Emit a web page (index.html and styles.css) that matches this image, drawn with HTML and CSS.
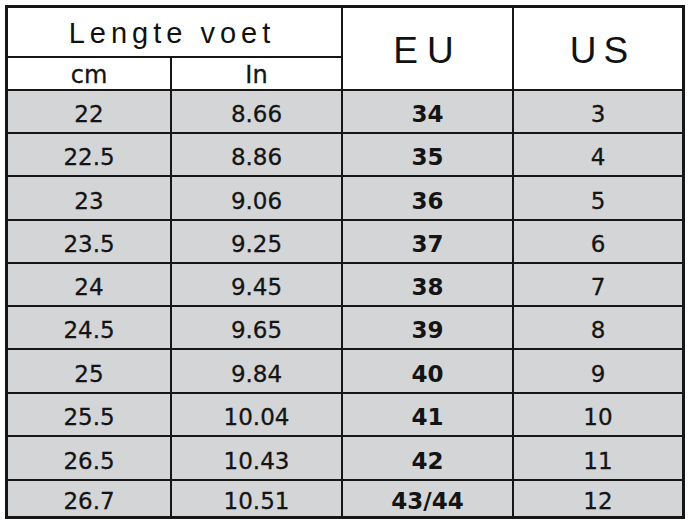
FILE: index.html
```html
<!DOCTYPE html>
<html lang="nl">
<head>
<meta charset="utf-8">
<title>Maattabel</title>
<link rel="stylesheet" href="styles.css">
</head>
<body>
<div class="chart">
  <div class="cell head head-wide">Lengte voet</div>
  <div class="cell head head-tall col-eu">EU</div>
  <div class="cell head head-tall col-us">US</div>
  <div class="cell sub col-cm">cm</div>
  <div class="cell sub col-in">In</div>

  <div class="cell">22</div><div class="cell">8.66</div><div class="cell eu">34</div><div class="cell">3</div>
  <div class="cell">22.5</div><div class="cell">8.86</div><div class="cell eu">35</div><div class="cell">4</div>
  <div class="cell">23</div><div class="cell">9.06</div><div class="cell eu">36</div><div class="cell">5</div>
  <div class="cell">23.5</div><div class="cell">9.25</div><div class="cell eu">37</div><div class="cell">6</div>
  <div class="cell">24</div><div class="cell">9.45</div><div class="cell eu">38</div><div class="cell">7</div>
  <div class="cell">24.5</div><div class="cell">9.65</div><div class="cell eu">39</div><div class="cell">8</div>
  <div class="cell">25</div><div class="cell">9.84</div><div class="cell eu">40</div><div class="cell">9</div>
  <div class="cell">25.5</div><div class="cell">10.04</div><div class="cell eu">41</div><div class="cell">10</div>
  <div class="cell">26.5</div><div class="cell">10.43</div><div class="cell eu">42</div><div class="cell">11</div>
  <div class="cell">26.7</div><div class="cell">10.51</div><div class="cell eu">43/44</div><div class="cell">12</div>
</div>
</body>
</html>
```

FILE: styles.css
```css
html, body {
  margin: 0;
  padding: 0;
  background: #ffffff;
}

.chart {
  margin: 5px 0 0 5px;
  width: 674px;
  display: grid;
  grid-template-columns: 162px 169px 169px 168px;
  grid-template-rows: 48px 31px 41px 41px 42px 41px 41px 41px 42px 41px 42px 35px;
  gap: 2px;
  padding: 3px;
  background: #161616;
}

.cell {
  background: #d4d5d7;
  color: #141414;
  display: flex;
  align-items: center;
  justify-content: center;
  font-family: "DejaVu Sans", Verdana, sans-serif;
  font-size: 23px;
  padding-top: 5px;
  box-sizing: border-box;
  -webkit-text-stroke: 0.3px #141414;
}

.eu {
  font-weight: bold;
  -webkit-text-stroke: 0;
}

.head {
  background: #ffffff;
  font-family: "Liberation Sans", Arial, sans-serif;
  color: #111;
  padding-top: 0;
  -webkit-text-stroke: 0;
}

.head-wide {
  grid-column: 1 / 3;
  grid-row: 1;
  font-size: 29px;
  letter-spacing: 5px;
  padding-top: 2px;
  padding-right: 5px;
}

.head-tall {
  grid-row: 1 / 3;
  font-size: 37px;
  padding-top: 4px;
}

.col-eu {
  grid-column: 3;
  letter-spacing: 9px;
  padding-left: 1px;
}

.col-us {
  grid-column: 4;
  letter-spacing: 7px;
  padding-left: 9px;
}

.col-cm { grid-column: 1; grid-row: 2; }
.col-in { grid-column: 2; grid-row: 2; }

.sub {
  background: #ffffff;
  font-size: 24px;
  padding-top: 3px;
}
```
